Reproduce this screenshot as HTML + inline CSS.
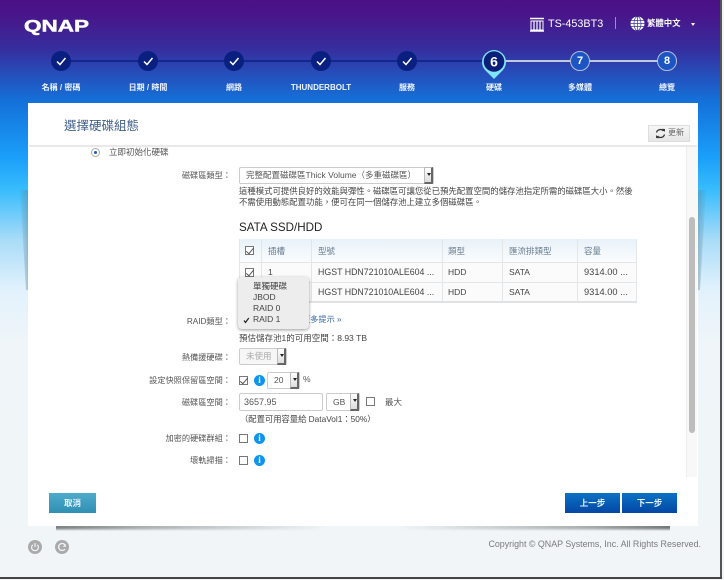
<!DOCTYPE html>
<html lang="zh-Hant">
<head>
<meta charset="utf-8">
<title>QNAP</title>
<style>
html,body{margin:0;padding:0;width:724px;height:580px;overflow:hidden;background:#f4f5f6}
body{font-family:"Liberation Sans","Noto Sans CJK TC",sans-serif;font-size:8.5px;color:#555;position:relative}
#win{position:absolute;left:0;top:0;width:720px;height:577px;overflow:hidden;filter:blur(.3px);
background:linear-gradient(180deg,#4b1186 0,#4a1488 12px,#352f9f 50px,#1470d8 100px,#1a9ffa 157px,#38bdfc 190px,#a9dcf8 240px,#e2f2fc 290px,#eff5f9 340px,#f1f5f8 577px)}
#edge{position:absolute;left:720px;top:0;width:2px;height:578px;background:#555}
#edge2{position:absolute;left:0;top:577px;width:722px;height:1.500px;background:#444}
.a{position:absolute;white-space:nowrap;line-height:12px}
.step{position:absolute;top:51px;width:20px;height:20px;border-radius:50%;background:#0a2080}
.step svg{position:absolute;left:4px;top:4px}
.sl{position:absolute;top:82px;width:86px;text-align:center;color:#eef4ff;font-size:8px;font-weight:bold;line-height:11px;white-space:nowrap}
.num{position:absolute;top:51px;width:18px;height:18px;border:1.300px solid #b8bed2;border-radius:50%;background:#1b55c4;color:#fff;font-weight:bold;font-size:11px;line-height:18px;text-align:center}
#panel{position:absolute;left:28px;top:103px;width:670px;height:423px;background:#fff}
.lb{position:absolute;right:489px;white-space:nowrap;line-height:12px;color:#555;font-size:8.200px;margin-top:1px}
.sel{position:absolute;box-sizing:border-box;border:1px solid #ccc;border-radius:2px;background:#fff;color:#555;line-height:15px;padding-left:6px;white-space:nowrap}
.sel i{position:absolute;right:0;top:-1px;bottom:-1px;width:9px;background:linear-gradient(#fff,#ddd);border:1px solid #bbb;border-right:2px solid #666;border-bottom:2px solid #666;box-sizing:border-box}
.sel i:after{content:"";position:absolute;left:1.500px;top:5px;border:2px solid transparent;border-top:3px solid #222}
.cb{position:absolute;box-sizing:border-box;width:9px;height:9px;border:1px solid #777;background:#fff}
.cb.c:after{content:"";position:absolute;left:2px;top:-1px;width:3px;height:7px;border:solid #555;border-width:0 1px 1px 0;transform:rotate(40deg)}
.info{position:absolute;width:11px;height:11px;border-radius:50%;background:#0d94ee;color:#fff;font:bold 9px/11px "Liberation Serif",serif;text-align:center}
.col{position:absolute;top:239px;height:63px;width:1px;background:#e3e6e9}
.row{position:absolute;left:239px;width:398px;height:1px;background:#e3e6e9}
.td{position:absolute;white-space:nowrap;line-height:12px;color:#444;font-size:8.500px}
.m{font-size:8.800px}
.n{font-size:9.300px}
.th{color:#6a7d92}
.btn{position:absolute;top:493px;height:20px;line-height:20px;text-align:center;color:#eaf4ff;font-size:8.500px;font-weight:bold;box-sizing:border-box}
.dd{position:absolute;left:253px;color:#444;font-size:8.500px;line-height:11px;white-space:nowrap}
.sh{position:absolute;top:526px;height:5px;-webkit-mask-image:linear-gradient(180deg,#000 0,#000 40%,transparent 100%);mask-image:linear-gradient(180deg,#000 0,#000 40%,transparent 100%)}
</style>
</head>
<body>
<div id="win">
  <!-- side shadows -->
  <div style="position:absolute;left:20px;top:190px;width:8px;height:100px;opacity:.75;background:linear-gradient(90deg,rgba(90,130,150,.1),rgba(90,130,150,.55));clip-path:polygon(0 0,100% 0,100% 100%,75% 100%)"></div>
  <div style="position:absolute;left:698px;top:190px;width:8px;height:100px;opacity:.75;background:linear-gradient(270deg,rgba(90,130,150,.1),rgba(90,130,150,.55));clip-path:polygon(0 0,100% 0,25% 100%,0 100%)"></div>

  <!-- logo -->
  <svg style="position:absolute;left:22px;top:16px" width="72" height="20"><text x="2" y="15.500" textLength="65" lengthAdjust="spacingAndGlyphs" font-family="Liberation Sans" font-weight="bold" font-size="17" fill="#fff" stroke="#fff" stroke-width=".5">QNAP</text></svg>

  <!-- model -->
  <svg style="position:absolute;left:530px;top:17px" width="15" height="15"><path d="M0 1.500h14M0 14h14" stroke="#fff" stroke-width="1.600"/><path d="M1 4h12v9H1z" fill="none" stroke="#fff"/><path d="M4 4v9M7 4v9M10 4v9" stroke="#fff" stroke-width="1.200"/></svg>
  <div class="a" style="left:548px;top:18px;color:#fff;font-size:10.800px;line-height:13px">TS-453BT3</div>
  <div style="position:absolute;left:615px;top:17px;width:1px;height:12px;background:#8b95c8"></div>
  <svg style="position:absolute;left:630px;top:16px" width="15" height="15"><circle cx="7.500" cy="7.500" r="7" fill="#fff"/><g fill="none" stroke="#3c35a0" stroke-width=".7"><ellipse cx="7.500" cy="7.500" rx="3.500" ry="7"/><path d="M7.500 .5v14M1 4.500h13M.5 7.500h14M1 10.500h13"/></g></svg>
  <div class="a" style="left:647px;top:17px;color:#fff;font-size:8.400px;font-weight:bold">繁體中文</div>
  <div style="position:absolute;left:691px;top:23px;border:2.500px solid transparent;border-top:3px solid #fff"></div>

  <!-- wizard lines -->
  <div style="position:absolute;left:61px;top:60px;width:433px;height:2px;background:#10288c"></div>
  <div style="position:absolute;left:494px;top:60px;width:173px;height:2px;background:#c4cadd"></div>

  <div class="step" style="left:51px"><svg width="12" height="12"><path d="M2 6.500l3 3 5.500-6.500" fill="none" stroke="#fff" stroke-width="1.500"/></svg></div>
  <div class="step" style="left:138px"><svg width="12" height="12"><path d="M2 6.500l3 3 5.500-6.500" fill="none" stroke="#fff" stroke-width="1.500"/></svg></div>
  <div class="step" style="left:224px"><svg width="12" height="12"><path d="M2 6.500l3 3 5.500-6.500" fill="none" stroke="#fff" stroke-width="1.500"/></svg></div>
  <div class="step" style="left:311px"><svg width="12" height="12"><path d="M2 6.500l3 3 5.500-6.500" fill="none" stroke="#fff" stroke-width="1.500"/></svg></div>
  <div class="step" style="left:397px"><svg width="12" height="12"><path d="M2 6.500l3 3 5.500-6.500" fill="none" stroke="#fff" stroke-width="1.500"/></svg></div>

  <svg style="position:absolute;left:481px;top:48px" width="26" height="32"><path d="M13 31L4.500 22.500A12 12 0 1 1 21.500 22.500Z" fill="#7fe6fb"/><circle cx="13" cy="13.500" r="10.300" fill="#0a1f7c"/><text x="13" y="18.500" text-anchor="middle" font-family="Liberation Sans" font-weight="bold" font-size="14" fill="#fff">6</text></svg>
  <div class="num" style="left:570px">7</div>
  <div class="num" style="left:657px">8</div>

  <div class="sl" style="left:18px">名稱 / 密碼</div>
  <div class="sl" style="left:105px">日期 / 時間</div>
  <div class="sl" style="left:191px">網路</div>
  <div class="sl" style="left:278px">THUNDERBOLT</div>
  <div class="sl" style="left:364px">服務</div>
  <div class="sl" style="left:451px">硬碟</div>
  <div class="sl" style="left:537px">多媒體</div>
  <div class="sl" style="left:624px">總覽</div>

  <!-- panel -->
  <div id="panel"></div>
  <!-- bottom shadow -->
  <div class="sh" style="left:56px;width:270px;background:linear-gradient(90deg,#7d8282,#a9adad 30%,rgba(200,205,205,0))"></div>
  <div class="sh" style="left:400px;width:270px;background:linear-gradient(270deg,#747979,#a9adad 30%,rgba(200,205,205,0))"></div>

  <div class="a" style="left:64px;top:118px;font-size:12.500px;line-height:16px;color:#3f5e8c">選擇硬碟組態</div>
  <div style="position:absolute;left:648px;top:125px;width:42px;height:17px;box-sizing:border-box;border:1px solid #ddd;background:linear-gradient(#f6f6f6,#e6e6e6)"></div>
  <svg style="position:absolute;left:655px;top:128px" width="11" height="11"><path d="M1.500 4.500A4 4 0 0 1 8.500 3M9.500 6.500A4 4 0 0 1 2.500 8" fill="none" stroke="#333" stroke-width="1.300"/><path d="M7 .8l3 .2-.2 3zM4 10.200l-3-.2.2-3z" fill="#333"/></svg>
  <div class="a" style="left:668px;top:127px;font-size:8px;color:#666">更新</div>

  <div style="position:absolute;left:29px;top:145px;width:668px;height:2px;background:#e9e9e9"></div>
  <div style="position:absolute;left:686px;top:147px;width:11px;height:330px;background:#f8f8f8;border-left:1px solid #eee;box-sizing:border-box"></div>
  <div style="position:absolute;left:689px;top:217px;width:6px;height:216px;border-radius:3px;background:#bdbdbd"></div>

  <!-- radio -->
  <div style="position:absolute;left:91px;top:148px;width:9px;height:9px;box-sizing:border-box;border:1px solid #aaa;border-radius:50%;background:#fff"></div>
  <div style="position:absolute;left:94px;top:151px;width:3px;height:3px;border-radius:50%;background:#2257d8"></div>
  <div class="a" style="left:109px;top:146px;color:#555">立即初始化硬碟</div>

  <div class="lb" style="top:169px">磁碟區類型：</div>
  <div class="sel" style="left:239px;top:167px;width:195px;height:17px;padding-left:6px">完整配置磁碟區Thick Volume（多重磁碟區）<i></i></div>
  <div class="a" style="left:239px;top:185px;color:#444;font-size:8.400px">這種模式可提供良好的效能與彈性。磁碟區可讓您從已預先配置空間的儲存池指定所需的磁碟區大小。然後</div>
  <div class="a" style="left:239px;top:196px;color:#444;font-size:8.400px">不需使用動態配置功能，便可在同一個儲存池上建立多個磁碟區。</div>

  <div class="a" style="left:239px;top:221px;font-size:11.600px;line-height:14px;color:#222">SATA SSD/HDD</div>

  <!-- table -->
  <div style="position:absolute;left:239px;top:239px;width:398px;height:23px;background:linear-gradient(#e9f2f9,#fafcfd);border-radius:3px 3px 0 0"></div>
  <div style="position:absolute;left:239px;top:262px;width:398px;height:40px;background:#fbfbfb"></div>
  <div class="row" style="top:262px"></div>
  <div class="row" style="top:282px"></div>
  <div class="row" style="top:301px;height:2px;background:#dfe1e3"></div>
  <div class="col" style="left:239px"></div>
  <div class="col" style="left:261px"></div>
  <div class="col" style="left:311px"></div>
  <div class="col" style="left:442px"></div>
  <div class="col" style="left:502px"></div>
  <div class="col" style="left:577px"></div>
  <div class="col" style="left:636px"></div>

  <div class="cb c" style="left:245px;top:246px"></div>
  <div class="td th" style="left:268px;top:245px">插槽</div>
  <div class="td th" style="left:318px;top:245px">型號</div>
  <div class="td th" style="left:448px;top:245px">類型</div>
  <div class="td th" style="left:509px;top:245px">匯流排類型</div>
  <div class="td th" style="left:584px;top:245px">容量</div>

  <div class="cb c" style="left:245px;top:268px"></div>
  <div class="td" style="left:268px;top:266px">1</div>
  <div class="td m" style="left:318px;top:266px">HGST HDN721010ALE604 ...</div>
  <div class="td" style="left:448px;top:266px">HDD</div>
  <div class="td" style="left:509px;top:266px">SATA</div>
  <div class="td n" style="left:584px;top:266px">9314.00 ...</div>

  <div class="td m" style="left:318px;top:286px">HGST HDN721010ALE604 ...</div>
  <div class="td" style="left:448px;top:286px">HDD</div>
  <div class="td" style="left:509px;top:286px">SATA</div>
  <div class="td n" style="left:584px;top:286px">9314.00 ...</div>

  <div class="lb" style="top:315px">RAID類型：</div>
  <div class="a" style="left:302px;top:314px;color:#3a66a8;font-size:8.200px">更多提示 »</div>

  <!-- dropdown -->
  <div style="position:absolute;left:238px;top:277px;width:71px;height:52px;background:#eeeded;border-radius:4px;box-shadow:0 1px 3px rgba(0,0,0,.4)"></div>
  <div class="dd" style="top:281px">單獨硬碟</div>
  <div class="dd" style="top:292px">JBOD</div>
  <div class="dd" style="top:303px">RAID 0</div>
  <div class="dd" style="top:314px">RAID 1</div>
  <svg style="position:absolute;left:243px;top:317px" width="7" height="7"><path d="M1 3.500l1.500 2L5.800 1" fill="none" stroke="#222" stroke-width="1.200"/></svg>

  <div class="a" style="left:239px;top:332px;color:#444">預估儲存池1的可用空間：8.93 TB</div>

  <div class="lb" style="top:351px">熱備援硬碟：</div>
  <div class="sel" style="left:239px;top:348px;width:48px;height:17px;color:#aaa;background:#f6f6f6">未使用<i></i></div>

  <div class="lb" style="top:374px">設定快照保留區空間：</div>
  <div class="cb c" style="left:239px;top:376px"></div>
  <div class="info" style="left:254px;top:375px">i</div>
  <div class="sel" style="left:267px;top:372px;width:33px;height:17px">20<i></i></div>
  <div class="a" style="left:303px;top:373px">%</div>

  <div class="lb" style="top:396px">磁碟區空間：</div>
  <div class="sel" style="left:239px;top:393px;width:84px;height:18px;padding-left:4px;line-height:16px;font-size:9px">3657.95</div>
  <div class="sel" style="left:326px;top:393px;width:34px;height:18px;line-height:16px">GB<i></i></div>
  <div class="cb" style="left:366px;top:397px"></div>
  <div class="a" style="left:385px;top:396px">最大</div>
  <div class="a" style="left:240px;top:413px;color:#444;font-size:8.300px">（配置可用容量給 DataVol1：50%）</div>

  <div class="lb" style="top:432px">加密的硬碟群組：</div>
  <div class="cb" style="left:239px;top:434px"></div>
  <div class="info" style="left:254px;top:433px">i</div>

  <div class="lb" style="top:454px">壞軌掃描：</div>
  <div class="cb" style="left:239px;top:456px"></div>
  <div class="info" style="left:254px;top:455px">i</div>

  <!-- buttons -->
  <div class="btn" style="left:49px;width:47px;background:linear-gradient(#4eaccb,#2f8fb3)">取消</div>
  <div class="btn" style="left:565px;width:55px;background:linear-gradient(#0a72c4,#0347a4)">上一步</div>
  <div class="btn" style="left:622px;width:55px;background:linear-gradient(#0a72c4,#0347a4)">下一步</div>

  <!-- footer icons -->
  <svg style="position:absolute;left:28px;top:540px" width="14" height="14"><circle cx="7" cy="7" r="7" fill="#aaa"/><path d="M4.700 4.800A3.400 3.400 0 1 0 9.300 4.800" fill="none" stroke="#f1f5f8" stroke-width="1.200"/><path d="M7 3v4" stroke="#f1f5f8" stroke-width="1.200"/></svg>
  <svg style="position:absolute;left:55px;top:540px" width="14" height="14"><circle cx="7" cy="7" r="7" fill="#aaa"/><path d="M10 5A3.500 3.500 0 1 0 10 9" fill="none" stroke="#f1f5f8" stroke-width="1.300"/><path d="M7.500 6.800h3.500v-2.500z" fill="#f1f5f8"/></svg>
  <div class="a" style="right:19px;top:538px;font-size:8.900px;color:#7b7b7b">Copyright © QNAP Systems, Inc. All Rights Reserved.</div>
</div>
<div id="edge"></div>
<div id="edge2"></div>
</body>
</html>
